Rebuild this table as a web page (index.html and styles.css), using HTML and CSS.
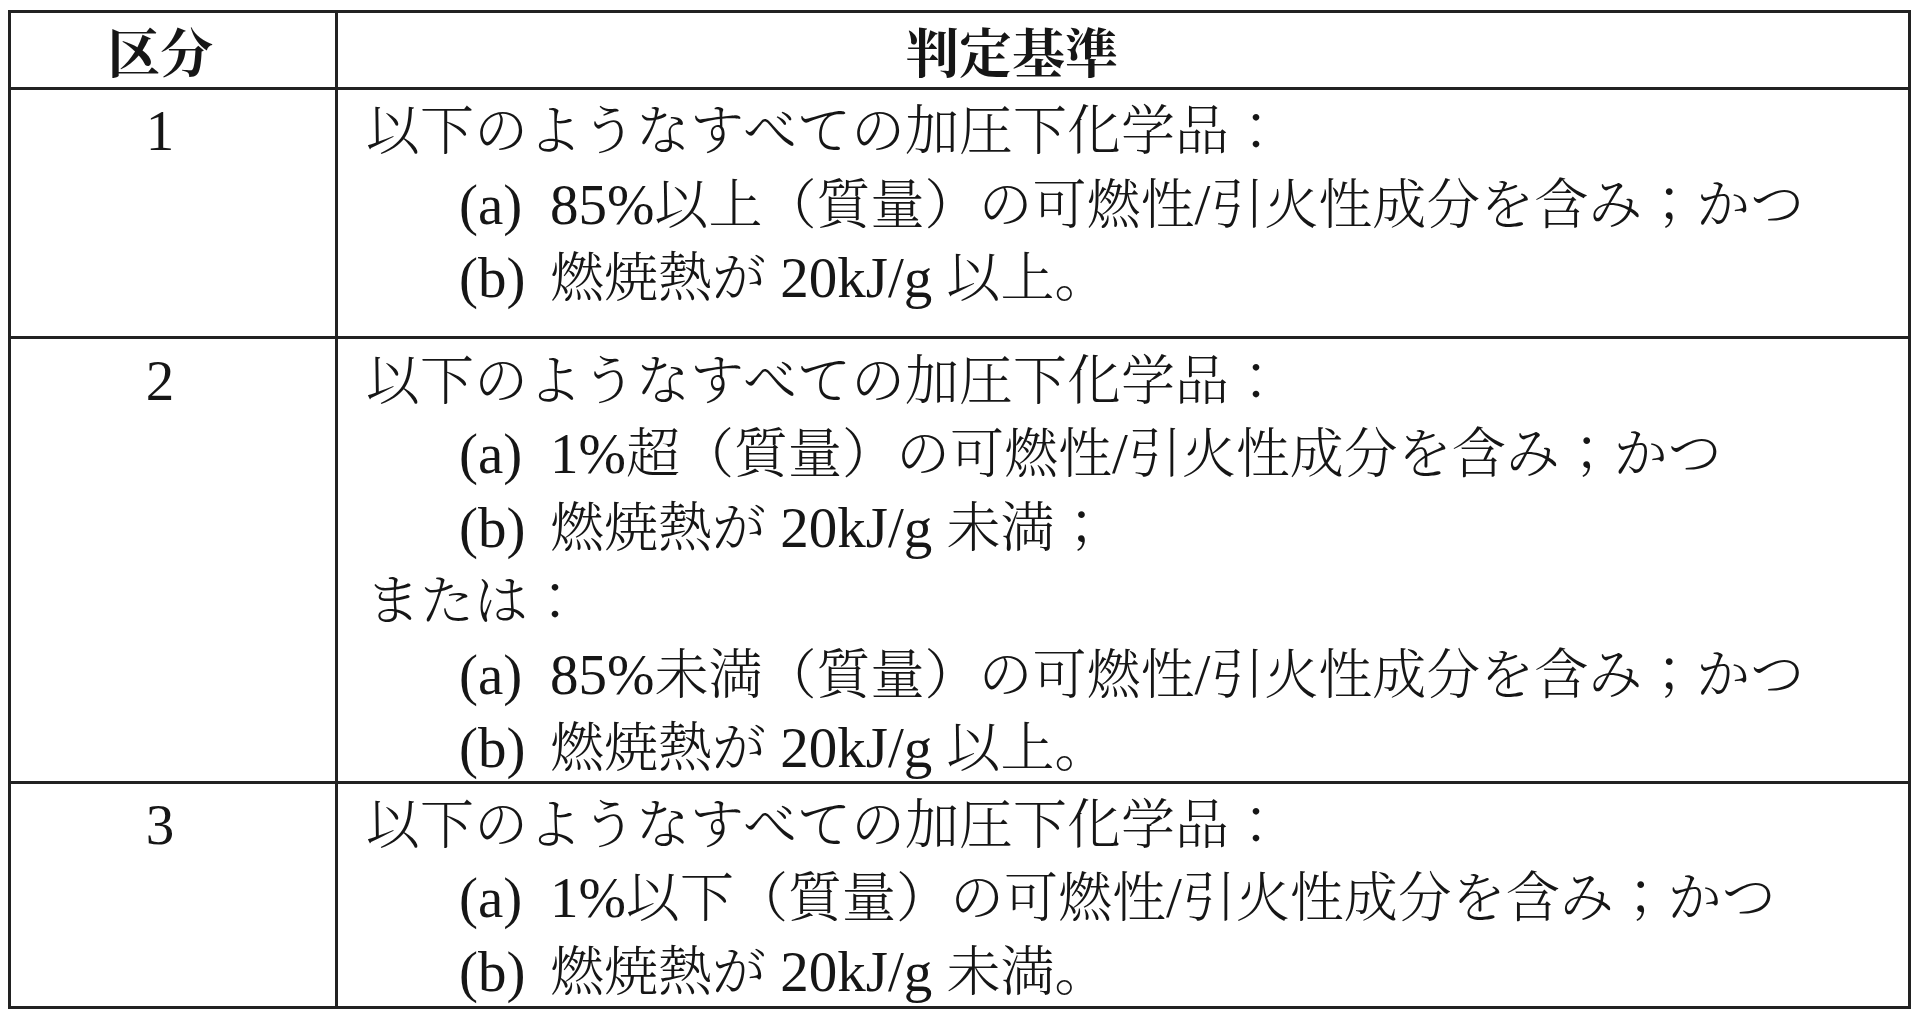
FILE: index.html
```html
<!DOCTYPE html>
<html lang="ja">
<head>
<meta charset="utf-8">
<title>区分と判定基準</title>
<link rel="stylesheet" href="styles.css">
</head>
<body>
<table class="criteria">
  <colgroup>
    <col class="col-cat">
    <col class="col-rule">
  </colgroup>
  <thead>
    <tr>
      <th class="cat">区分</th>
      <th class="rule">判定基準</th>
    </tr>
  </thead>
  <tbody>
    <tr class="row row-1">
      <td class="cat"><span class="en">1</span></td>
      <td class="rule">
        <div class="line">以下のようなすべての加圧下化学品：</div>
        <div class="line sub"><span class="label en">(a)</span><span class="en">85%</span>以上（質量）の可燃性<span class="en">/</span>引火性成分を含み；かつ</div>
        <div class="line sub"><span class="label en">(b)</span>燃焼熱が<span class="en"> 20kJ/g </span>以上。</div>
      </td>
    </tr>
    <tr class="row row-2">
      <td class="cat"><span class="en">2</span></td>
      <td class="rule">
        <div class="line">以下のようなすべての加圧下化学品：</div>
        <div class="line sub"><span class="label en">(a)</span><span class="en">1%</span>超（質量）の可燃性<span class="en">/</span>引火性成分を含み；かつ</div>
        <div class="line sub"><span class="label en">(b)</span>燃焼熱が<span class="en"> 20kJ/g </span>未満；</div>
        <div class="line">または：</div>
        <div class="line sub"><span class="label en">(a)</span><span class="en">85%</span>未満（質量）の可燃性<span class="en">/</span>引火性成分を含み；かつ</div>
        <div class="line sub"><span class="label en">(b)</span>燃焼熱が<span class="en"> 20kJ/g </span>以上。</div>
      </td>
    </tr>
    <tr class="row row-3">
      <td class="cat"><span class="en">3</span></td>
      <td class="rule">
        <div class="line">以下のようなすべての加圧下化学品：</div>
        <div class="line sub"><span class="label en">(a)</span><span class="en">1%</span>以下（質量）の可燃性<span class="en">/</span>引火性成分を含み；かつ</div>
        <div class="line sub"><span class="label en">(b)</span>燃焼熱が<span class="en"> 20kJ/g </span>未満。</div>
      </td>
    </tr>
  </tbody>
</table>
</body>
</html>
```

FILE: styles.css
```css
html, body {
  margin: 0;
  padding: 0;
  background: #ffffff;
}

body {
  color: #161616;
  font-family: "Noto Serif CJK JP", "Noto Sans CJK JP", serif;
  font-weight: 300;
  font-size: 54px;
}

.criteria {
  margin: 10px 0 0 8px;
  width: 1903px;
  table-layout: fixed;
  border-collapse: separate;
  border-spacing: 0;
  border: 3px solid #222222;
}

.col-cat {
  width: 327px;
}

.criteria th,
.criteria td {
  padding: 0;
  vertical-align: top;
  border-bottom: 3px solid #222222;
}

.criteria tbody tr:last-child td {
  border-bottom: none;
}

.criteria .cat {
  border-right: 3px solid #222222;
  text-align: center;
  padding-right: 26px;
}

.criteria th {
  font-weight: 700;
  font-size: 53px;
  line-height: 74px;
  height: 74px;
}

.criteria th.rule {
  text-align: center;
  padding-right: 222px;
}

.criteria td {
  line-height: 73.5px;
}

.criteria td.rule {
  padding-left: 28px;
  text-align: left;
}

.row-1 td {
  padding-bottom: 25px;
}

.row-2 td {
  padding-top: 1px;
}

.row-3 td {
  padding-bottom: 2px;
}

.line {
  white-space: nowrap;
  height: 73.5px;
}

.sub {
  padding-left: 93px;
}

.en {
  font-family: "Liberation Serif", serif;
  font-weight: 400;
  font-size: 57px;
  line-height: 0;
}

.label {
  display: inline-block;
  width: 91px;
}
```
